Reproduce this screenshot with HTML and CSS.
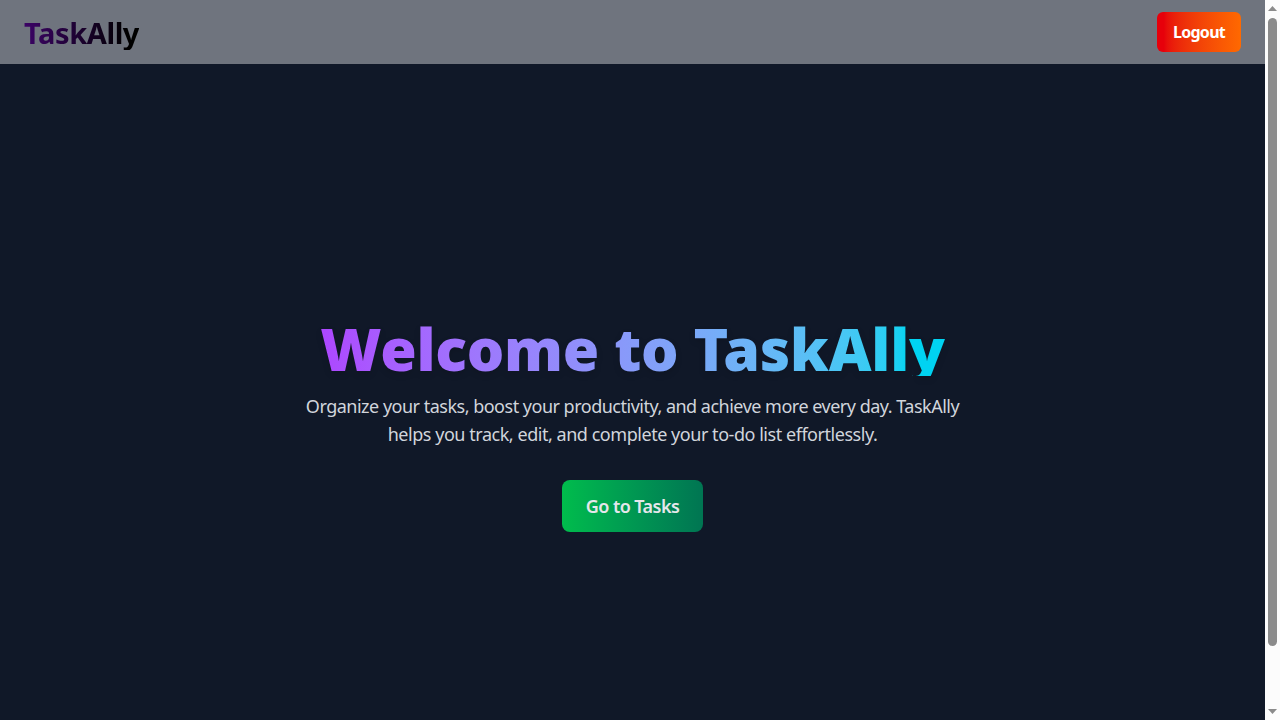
FILE: index.html
```html
<!DOCTYPE html>
<html lang="en">
<head>
<meta charset="utf-8">
<title>TaskAlly</title>
<link rel="stylesheet" href="styles.css">
</head>
<body>
<div class="page">
  <header class="navbar">
    <div class="logo">TaskAlly</div>
    <button class="logout">Logout</button>
  </header>
  <main class="hero">
    <h1 class="title">Welcome to TaskAlly</h1>
    <p class="intro"><span class="line-one">Organize your tasks, boost your productivity, and achieve more every day. TaskAlly</span><br><span class="line-two">helps you track, edit, and complete your to-do list effortlessly.</span></p>
    <button class="go">Go to Tasks</button>
  </main>
</div>
<div class="scrollbar">
  <svg class="arrow" width="9" height="5" viewBox="0 0 9 5"><path d="M0 5L4.5 0L9 5Z" fill="#8b8b8b"/></svg>
  <div class="track"><div class="thumb"></div></div>
  <svg class="arrow" width="9" height="5" viewBox="0 0 9 5"><path d="M0 0L4.5 5L9 0Z" fill="#8b8b8b"/></svg>
</div>
</body>
</html>
```
FILE: styles.css
```css
* { box-sizing: border-box; }
body {
  margin: 0;
  display: flex;
  height: 720px;
  overflow: hidden;
  background: #101828;
  font-family: "Segoe UI", "Noto Sans", "Open Sans", sans-serif;
}
button { border: 0; padding: 0; font-family: inherit; white-space: nowrap; }
.page { flex: 1; display: flex; flex-direction: column; }
.navbar {
  display: flex;
  flex: none;
  align-items: center;
  justify-content: space-between;
  height: 64px;
  padding: 0 24px;
  background: #6f747e;
}
.logo {
  padding-top: 2px;
  font-size: 29px;
  line-height: 34px;
  font-weight: 700;
  letter-spacing: -0.4px;
  color: transparent;
  background: linear-gradient(to right, #3c0366, #000 90%);
  -webkit-background-clip: text;
  background-clip: text;
}
.logout {
  width: 84px;
  height: 40px;
  border-radius: 6px;
  font-size: 16px;
  line-height: 24px;
  font-weight: 700;
  letter-spacing: -0.7px;
  color: #fff;
  background: linear-gradient(to right in oklab, #e7000b 8%, #ff6900);
}
.hero {
  flex: none;
  height: 656px;
  padding-top: 64px;
  display: flex;
  flex-direction: column;
  align-items: center;
  justify-content: center;
}
.title {
  margin: 0 0 16px;
  padding-top: 5px;
  font-size: 59px;
  line-height: 55px;
  font-weight: 900;
  letter-spacing: -0.25px;
  white-space: nowrap;
  color: transparent;
  background: linear-gradient(to right in oklab, #ad46ff, #00d3f2 94%);
  -webkit-background-clip: text;
  background-clip: text;
  filter: drop-shadow(0 3px 3px rgba(0, 0, 0, 0.12));
}
.intro {
  margin: 0 0 32px;
  font-size: 18px;
  line-height: 28px;
  text-align: center;
  white-space: nowrap;
  color: #d1d5dc;
}
.line-one { letter-spacing: -0.5px; }
.line-two { letter-spacing: -0.46px; }
.go {
  width: 141px;
  height: 52px;
  border-radius: 8px;
  font-size: 18px;
  line-height: 28px;
  font-weight: 600;
  letter-spacing: -0.55px;
  color: #e5e7eb;
  background: linear-gradient(to right in oklab, #00bc4c, #007552);
}
.scrollbar {
  width: 15px;
  display: flex;
  flex-direction: column;
  align-items: center;
  padding: 6px 0;
  background: #fcfcfc;
}
.arrow { display: block; flex: none; }
.track { flex: 1; padding-top: 7px; }
.thumb { width: 9px; height: 628px; border-radius: 5px; background: #8b8b8b; }
```
